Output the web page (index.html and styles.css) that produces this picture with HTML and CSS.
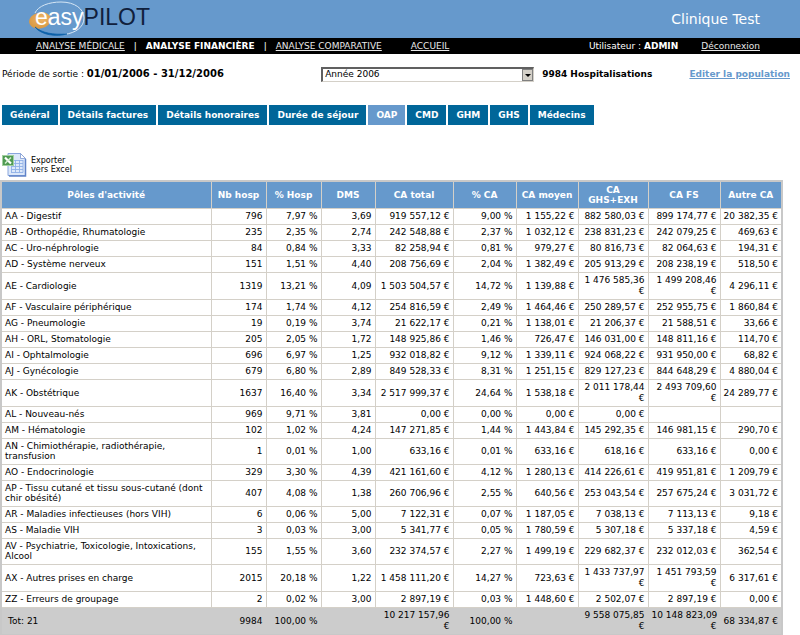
FILE: index.html
```html
<!DOCTYPE html>
<html lang="fr">
<head>
    <meta charset="UTF-8">
    <meta name="viewport" content="width=device-width, initial-scale=1.0">
    <title>easyPILOT - Analyse financière</title>
    <link rel="stylesheet" href="styles.css">
</head>
<body>
    <header class="banner">
        <div class="logo">
            <svg class="logo-shape" width="60" height="38" viewBox="0 0 60 38" aria-hidden="true">
                <defs>
                    <radialGradient id="ball" cx="0.6" cy="0.4" r="0.6">
                        <stop offset="0" stop-color="#efb566"/>
                        <stop offset="1" stop-color="#d99a45"/>
                    </radialGradient>
                </defs>
                <ellipse cx="11" cy="20.500" rx="11" ry="8" fill="url(#ball)" transform="rotate(-12 11 20.500)"/>
                <path d="M6 13C9 6 20 2 32 2c14 0 23 7 23 16 0 9-8 15-20 16.500" fill="none" stroke="#d5e6f5" stroke-width="1"/>
                <path d="M6 27c7 6 18 8 32 7-11 3-26 1-32-7z" fill="#0a5fa8" stroke="#0a5fa8" stroke-width="0.800"/>
            </svg>
            <span class="logo-text"><span class="logo-easy">easy</span>PILOT</span>
        </div>
        <div class="client">Clinique Test</div>
    </header>

    <nav class="menu">
        <a href="#">ANALYSE MÉDICALE</a>
        <span class="separator">|</span>
        <strong>ANALYSE FINANCIÈRE</strong>
        <span class="separator">|</span>
        <a href="#">ANALYSE COMPARATIVE</a>
        <a href="#" class="home">ACCUEIL</a>
        <span class="user">Utilisateur : <strong>ADMIN</strong></span>
        <a href="#" class="logout">Déconnexion</a>
    </nav>

    <!-- Période et filtre -->
    <div class="filters">
        <div class="period">Période de sortie : <strong>01/01/2006 - 31/12/2006</strong></div>
        <div class="select-box">
            <select class="year" aria-label="Période">
                <option>Année 2006</option>
            </select>
            <span class="arrow"></span>
        </div>
        <strong>9984 Hospitalisations</strong>
        <a href="#" class="edit">Editer la population</a>
    </div>

    <!-- Onglets -->
    <nav class="tabs">
        <a href="#">Général</a>
        <a href="#">Détails factures</a>
        <a href="#">Détails honoraires</a>
        <a href="#">Durée de séjour</a>
        <a href="#" class="active">OAP</a>
        <a href="#">CMD</a>
        <a href="#">GHM</a>
        <a href="#">GHS</a>
        <a href="#">Médecins</a>
    </nav>

    <a href="#" class="export">
        <svg width="25" height="25" viewBox="0 0 25 25" aria-hidden="true">
            <path d="M6 1.500h12.500l5 5V23.500H6z" fill="#dce8fa" stroke="#8aa6dc"/>
            <path d="M23.500 7v17H7" fill="none" stroke="#5f82c8" stroke-width="1.500"/>
            <path d="M18.500 1.500v5h5z" fill="#fff" stroke="#7c98d0" stroke-width="0.800"/>
            <path d="M12 8.500h9M12 11.500h9M9 14.500h12M9 17.500h12M9 20.500h12M9.500 14v6.500M13.500 8v12.500M17.500 8v12.500M21 8v12.500" fill="none" stroke="#8fb0e6" stroke-width="0.900"/>
            <rect x="0.500" y="3.500" width="11" height="10" fill="#4f9a52" stroke="#a2cfa0"/>
            <path d="M3 5.500l6 6" stroke="#fff" stroke-width="2.200"/>
            <path d="M9 5.500l-6 6" stroke="#d8f0d4" stroke-width="1.500"/>
        </svg>
        <span>Exporter<br>vers Excel</span>
    </a>

    <table class="results">
        <colgroup>
            <col class="c-name"><col class="c-nb"><col class="c-nb"><col class="c-dms"><col class="c-total">
            <col class="c-pct"><col class="c-avg"><col class="c-ghs"><col class="c-fs"><col class="c-other">
        </colgroup>
        <thead>
            <tr><th>Pôles d'activité</th><th>Nb hosp</th><th>% Hosp</th><th>DMS</th><th>CA total</th><th>% CA</th><th>CA moyen</th><th>CA GHS+EXH</th><th>CA FS</th><th>Autre CA</th></tr>
        </thead>
        <tbody>
            <tr><td>AA - Digestif</td><td>796</td><td>7,97 %</td><td>3,69</td><td>919&nbsp;557,12 €</td><td>9,00 %</td><td>1&nbsp;155,22 €</td><td>882&nbsp;580,03 €</td><td>899&nbsp;174,77 €</td><td>20&nbsp;382,35 €</td></tr>
            <tr><td>AB - Orthopédie, Rhumatologie</td><td>235</td><td>2,35 %</td><td>2,74</td><td>242&nbsp;548,88 €</td><td>2,37 %</td><td>1&nbsp;032,12 €</td><td>238&nbsp;831,23 €</td><td>242&nbsp;079,25 €</td><td>469,63 €</td></tr>
            <tr><td>AC - Uro-néphrologie</td><td>84</td><td>0,84 %</td><td>3,33</td><td>82&nbsp;258,94 €</td><td>0,81 %</td><td>979,27 €</td><td>80&nbsp;816,73 €</td><td>82&nbsp;064,63 €</td><td>194,31 €</td></tr>
            <tr><td>AD - Système nerveux</td><td>151</td><td>1,51 %</td><td>4,40</td><td>208&nbsp;756,69 €</td><td>2,04 %</td><td>1&nbsp;382,49 €</td><td>205&nbsp;913,29 €</td><td>208&nbsp;238,19 €</td><td>518,50 €</td></tr>
            <tr><td>AE - Cardiologie</td><td>1319</td><td>13,21 %</td><td>4,09</td><td>1&nbsp;503&nbsp;504,57 €</td><td>14,72 %</td><td>1&nbsp;139,88 €</td><td>1&nbsp;476&nbsp;585,36 €</td><td>1&nbsp;499&nbsp;208,46 €</td><td>4&nbsp;296,11 €</td></tr>
            <tr><td>AF - Vasculaire périphérique</td><td>174</td><td>1,74 %</td><td>4,12</td><td>254&nbsp;816,59 €</td><td>2,49 %</td><td>1&nbsp;464,46 €</td><td>250&nbsp;289,57 €</td><td>252&nbsp;955,75 €</td><td>1&nbsp;860,84 €</td></tr>
            <tr><td>AG - Pneumologie</td><td>19</td><td>0,19 %</td><td>3,74</td><td>21&nbsp;622,17 €</td><td>0,21 %</td><td>1&nbsp;138,01 €</td><td>21&nbsp;206,37 €</td><td>21&nbsp;588,51 €</td><td>33,66 €</td></tr>
            <tr><td>AH - ORL, Stomatologie</td><td>205</td><td>2,05 %</td><td>1,72</td><td>148&nbsp;925,86 €</td><td>1,46 %</td><td>726,47 €</td><td>146&nbsp;031,00 €</td><td>148&nbsp;811,16 €</td><td>114,70 €</td></tr>
            <tr><td>AI - Ophtalmologie</td><td>696</td><td>6,97 %</td><td>1,25</td><td>932&nbsp;018,82 €</td><td>9,12 %</td><td>1&nbsp;339,11 €</td><td>924&nbsp;068,22 €</td><td>931&nbsp;950,00 €</td><td>68,82 €</td></tr>
            <tr><td>AJ - Gynécologie</td><td>679</td><td>6,80 %</td><td>2,89</td><td>849&nbsp;528,33 €</td><td>8,31 %</td><td>1&nbsp;251,15 €</td><td>829&nbsp;127,23 €</td><td>844&nbsp;648,29 €</td><td>4&nbsp;880,04 €</td></tr>
            <tr><td>AK - Obstétrique</td><td>1637</td><td>16,40 %</td><td>3,34</td><td>2&nbsp;517&nbsp;999,37 €</td><td>24,64 %</td><td>1&nbsp;538,18 €</td><td>2&nbsp;011&nbsp;178,44 €</td><td>2&nbsp;493&nbsp;709,60 €</td><td>24&nbsp;289,77 €</td></tr>
            <tr><td>AL - Nouveau-nés</td><td>969</td><td>9,71 %</td><td>3,81</td><td>0,00 €</td><td>0,00 %</td><td>0,00 €</td><td>0,00 €</td><td></td><td></td></tr>
            <tr><td>AM - Hématologie</td><td>102</td><td>1,02 %</td><td>4,24</td><td>147&nbsp;271,85 €</td><td>1,44 %</td><td>1&nbsp;443,84 €</td><td>145&nbsp;292,35 €</td><td>146&nbsp;981,15 €</td><td>290,70 €</td></tr>
            <tr><td>AN - Chimiothérapie, radiothérapie, transfusion</td><td>1</td><td>0,01 %</td><td>1,00</td><td>633,16 €</td><td>0,01 %</td><td>633,16 €</td><td>618,16 €</td><td>633,16 €</td><td>0,00 €</td></tr>
            <tr><td>AO - Endocrinologie</td><td>329</td><td>3,30 %</td><td>4,39</td><td>421&nbsp;161,60 €</td><td>4,12 %</td><td>1&nbsp;280,13 €</td><td>414&nbsp;226,61 €</td><td>419&nbsp;951,81 €</td><td>1&nbsp;209,79 €</td></tr>
            <tr><td>AP - Tissu cutané et tissu sous-cutané (dont chir obésité)</td><td>407</td><td>4,08 %</td><td>1,38</td><td>260&nbsp;706,96 €</td><td>2,55 %</td><td>640,56 €</td><td>253&nbsp;043,54 €</td><td>257&nbsp;675,24 €</td><td>3&nbsp;031,72 €</td></tr>
            <tr><td>AR - Maladies infectieuses (hors VIH)</td><td>6</td><td>0,06 %</td><td>5,00</td><td>7&nbsp;122,31 €</td><td>0,07 %</td><td>1&nbsp;187,05 €</td><td>7&nbsp;038,13 €</td><td>7&nbsp;113,13 €</td><td>9,18 €</td></tr>
            <tr><td>AS - Maladie VIH</td><td>3</td><td>0,03 %</td><td>3,00</td><td>5&nbsp;341,77 €</td><td>0,05 %</td><td>1&nbsp;780,59 €</td><td>5&nbsp;307,18 €</td><td>5&nbsp;337,18 €</td><td>4,59 €</td></tr>
            <tr><td>AV - Psychiatrie, Toxicologie, Intoxications, Alcool</td><td>155</td><td>1,55 %</td><td>3,60</td><td>232&nbsp;374,57 €</td><td>2,27 %</td><td>1&nbsp;499,19 €</td><td>229&nbsp;682,37 €</td><td>232&nbsp;012,03 €</td><td>362,54 €</td></tr>
            <tr><td>AX - Autres prises en charge</td><td>2015</td><td>20,18 %</td><td>1,22</td><td>1&nbsp;458&nbsp;111,20 €</td><td>14,27 %</td><td>723,63 €</td><td>1&nbsp;433&nbsp;737,97 €</td><td>1&nbsp;451&nbsp;793,59 €</td><td>6&nbsp;317,61 €</td></tr>
            <tr><td>ZZ - Erreurs de groupage</td><td>2</td><td>0,02 %</td><td>3,00</td><td>2&nbsp;897,19 €</td><td>0,03 %</td><td>1&nbsp;448,60 €</td><td>2&nbsp;502,07 €</td><td>2&nbsp;897,19 €</td><td>0,00 €</td></tr>
        </tbody>
        <tfoot>
            <tr><td>Tot: 21</td><td>9984</td><td>100,00 %</td><td></td><td>10&nbsp;217&nbsp;157,96 €</td><td>100,00 %</td><td></td><td>9&nbsp;558&nbsp;075,85 €</td><td>10&nbsp;148&nbsp;823,09 €</td><td>68&nbsp;334,87 €</td></tr>
        </tfoot>
    </table>
</body>
</html>
```
FILE: styles.css
```css
body {
    font-family: Verdana, "DejaVu Sans", sans-serif;
    font-size: 9px;
    line-height: 11px;
    background-color: white;
    color: black;
    margin: 0;
}

.banner {
    display: flex;
    justify-content: space-between;
    align-items: center;
    height: 38px;
    padding: 0 40px 0 29px;
    background-color: #6699cc;
}

.logo {
    position: relative;
    height: 38px;
}

.logo-shape {
    display: block;
}

.logo-text {
    position: absolute;
    left: 6px;
    top: 5px;
    font-family: "Liberation Sans", Arial, sans-serif;
    font-size: 23px;
    line-height: 24px;
    color: #10203c;
}

.logo-easy {
    color: white;
}

.client {
    font-size: 14px;
    line-height: 16px;
    color: white;
}

.menu {
    display: flex;
    align-items: center;
    gap: 9px;
    height: 16px;
    padding: 0 40px 0 36px;
    background-color: black;
    color: white;
}

.menu a {
    color: #e8e8e8;
}

.menu .home {
    margin-left: 20px;
}

.user {
    margin-left: auto;
}

.menu .logout {
    margin-left: 14px;
}

.filters {
    display: flex;
    align-items: center;
    gap: 8px;
    height: 16px;
    margin-top: 12px;
    padding: 0 10px 0 2px;
}

.period {
    flex: 0 0 40%;
    margin-right: -4px;
}

.period strong {
    font-size: 10px;
}

.select-box {
    position: relative;
    flex: 0 1 213px;
}

.year {
    display: block;
    width: 100%;
    height: 15px;
    padding: 0 2px;
    font: inherit;
    color: black;
    background-color: white;
    border: 1px solid #d4d0c8;
    border-top: 2px solid #606060;
    border-left: 2px solid #606060;
    border-radius: 0;
    appearance: none;
}

.arrow {
    position: absolute;
    top: 2px;
    right: 1px;
    width: 11px;
    height: 12px;
    background-color: #d4d0c8;
    border: 1px solid #808080;
    box-sizing: border-box;
    pointer-events: none;
}

.arrow::after {
    content: "";
    position: absolute;
    top: 4px;
    left: 2px;
    border: 3px solid transparent;
    border-top-color: black;
    border-bottom: 0;
}

.edit {
    margin-left: auto;
    font-weight: bold;
    color: #6699cc;
}

.tabs {
    display: flex;
    gap: 2px;
    margin: 23px 0 0 2px;
}

.tabs a {
    padding: 5px 8px 4px;
    background-color: #006699;
    color: white;
    font-weight: bold;
    text-decoration: none;
}

.tabs .active {
    background-color: #6699cc;
}

.export {
    display: flex;
    align-items: center;
    gap: 4px;
    width: max-content;
    margin: 27px 0 3px 2px;
    font-size: 8px;
    line-height: 9px;
    color: black;
    text-decoration: none;
}

.results {
    width: calc(100% - 17px);
    table-layout: fixed;
    border-collapse: collapse;
    border: 2px solid #c8c8c8;
}

.c-name { width: 210px; }
.c-nb { width: 55px; }
.c-dms { width: 54px; }
.c-total { width: 78px; }
.c-pct { width: 63px; }
.c-avg { width: 62px; }
.c-ghs { width: 70px; }
.c-fs { width: 72px; }
.c-other { width: 62px; }

.results th {
    padding: 2px;
    line-height: 10px;
    height: 22px;
    border: 1px solid #d4d0c8;
    background-color: #6699cc;
    color: white;
}

.results td {
    padding: 2px 3px;
    border: 1px solid #d4d0c8;
    text-align: right;
}

.results td:first-child {
    padding: 2px 3px 3px;
    line-height: 10px;
    text-align: left;
}

.results tfoot td {
    background-color: #cccccc;
    border-color: #cccccc;
}

.results tfoot td:first-child {
    padding-left: 6px;
}
```
